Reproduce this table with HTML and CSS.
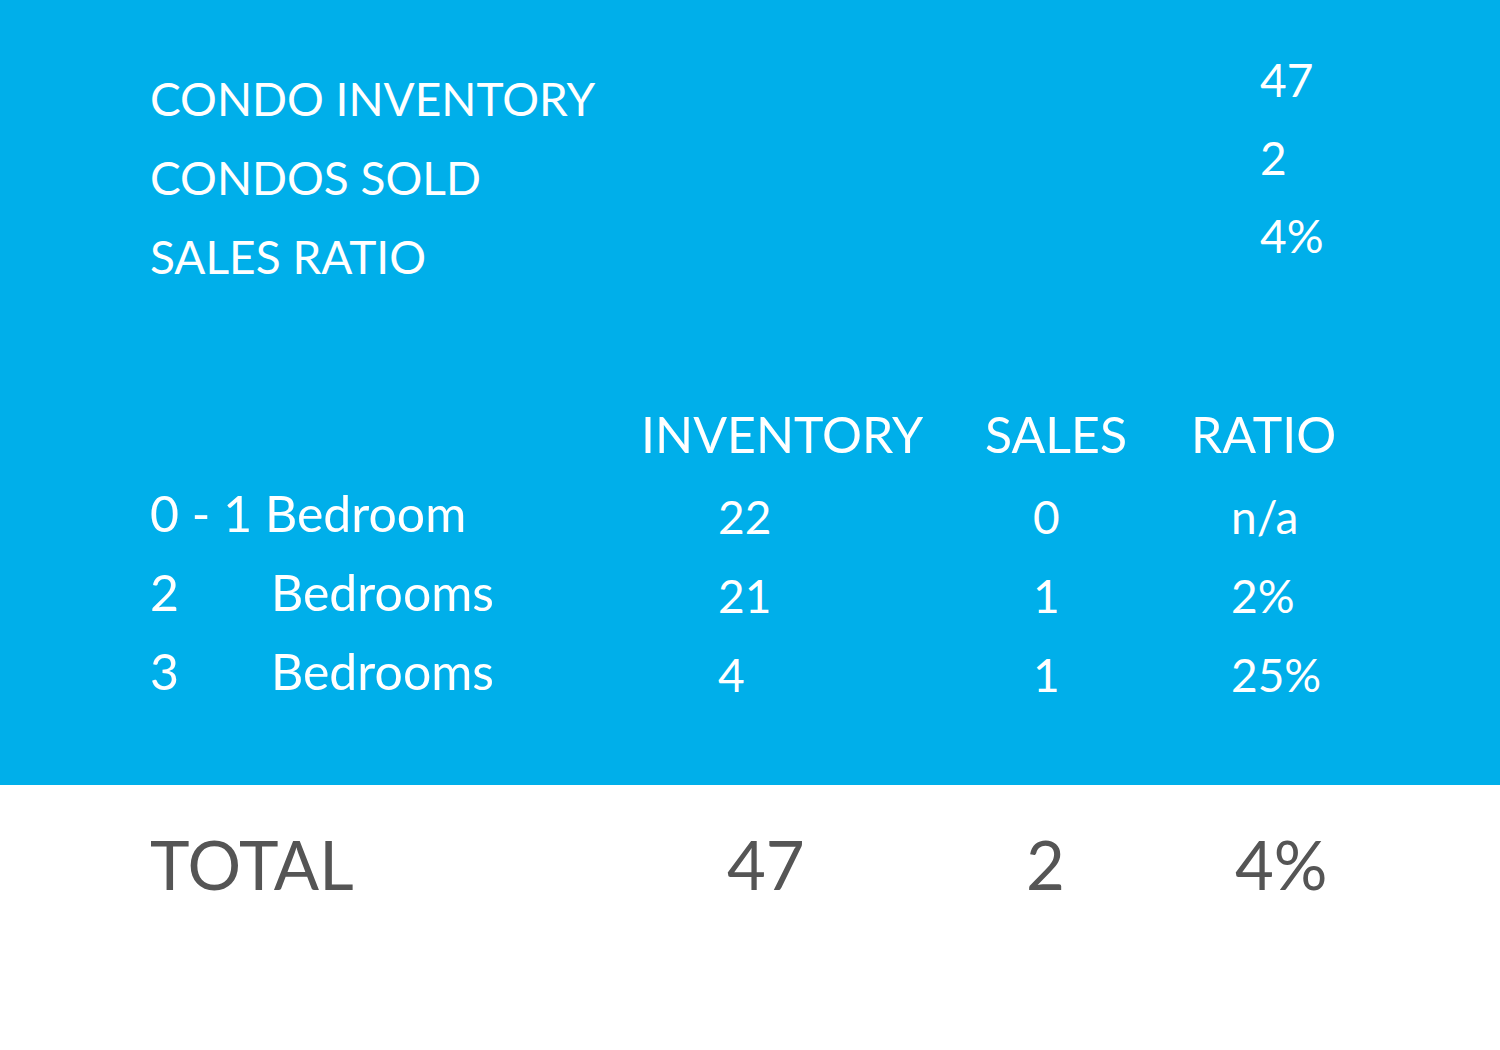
FILE: index.html
```html
<!DOCTYPE html>
<html>
<head>
<meta charset="utf-8">
<link rel="stylesheet" href="styles.css">
</head>
<body>
<section class="blue">
  <div class="summary">
    <div class="sum-labels">
      <div>CONDO INVENTORY</div>
      <div>CONDOS SOLD</div>
      <div>SALES RATIO</div>
    </div>
    <div class="sum-values">
      <div>47</div>
      <div>2</div>
      <div>4%</div>
    </div>
  </div>
  <div class="table">
    <div class="th"></div>
    <div class="th">INVENTORY</div>
    <div class="th">SALES</div>
    <div class="th">RATIO</div>

    <div class="label">0 - 1 Bedroom</div>
    <div class="val v-inv">22</div>
    <div class="val v-sales">0</div>
    <div class="val v-ratio">n/a</div>

    <div class="label"><span class="bnum">2</span>Bedrooms</div>
    <div class="val v-inv">21</div>
    <div class="val v-sales">1</div>
    <div class="val v-ratio">2%</div>

    <div class="label"><span class="bnum">3</span>Bedrooms</div>
    <div class="val v-inv">4</div>
    <div class="val v-sales">1</div>
    <div class="val v-ratio">25%</div>
  </div>
</section>
<section class="total">
  <div class="t-label">TOTAL</div>
  <div class="t-inv">47</div>
  <div class="t-sales">2</div>
  <div class="t-ratio">4%</div>
</section>
</body>
</html>
```
FILE: styles.css
```css
html, body {
  margin: 0;
  padding: 0;
  background: #ffffff;
  font-family: Lato, "Open Sans", sans-serif;
}

.blue {
  background: #00afea;
  color: #ffffff;
  padding: 0 0 0 150px;
  height: 785px;
  box-sizing: border-box;
}

.summary {
  display: flex;
  font-size: 46px;
}

.sum-labels {
  width: 1110px;
  padding-top: 59px;
  line-height: 79px;
}

.sum-values {
  padding-top: 41px;
  line-height: 78px;
}

.table {
  display: grid;
  grid-template-columns: 491px 344px 206px 200px;
  margin-top: 99px;
}

.th {
  font-size: 50px;
  line-height: 79px;
}

.label {
  font-size: 50px;
  line-height: 79px;
}

.bnum {
  display: inline-block;
  width: 121px;
}

.val {
  font-size: 46px;
  line-height: 72px;
  padding-top: 7px;
}

.v-inv { padding-left: 77px; }
.v-sales { padding-left: 48px; }
.v-ratio { padding-left: 40px; }

.total {
  display: grid;
  grid-template-columns: 577px 299px 209px 200px;
  padding: 34px 0 0 150px;
  color: #555555;
  font-size: 67px;
  line-height: 90px;
}
```
